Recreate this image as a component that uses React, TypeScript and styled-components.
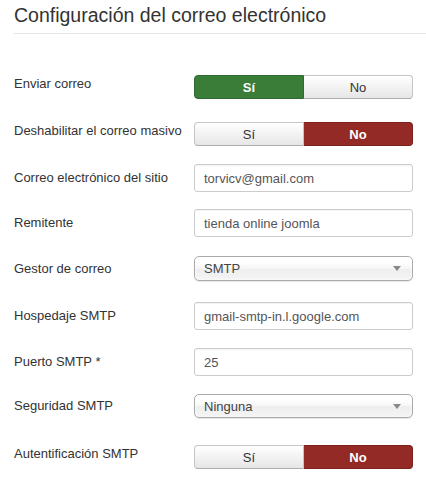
import React from "react";
import styled, { createGlobalStyle } from "styled-components";

const Global = createGlobalStyle`
  html, body { margin: 0; padding: 0; background: #fff; }
  body { font-family: "Liberation Sans", Arial, sans-serif; color: #333; font-size: 13px; }
`;

const Page = styled.div`
  padding: 0 0 0 14px;
  width: 426px;
  box-sizing: border-box;
`;

const Legend = styled.div`
  font-size: 19.5px;
  line-height: 24px;
  padding-top: 3px;
  padding-bottom: 6px;
  color: #333;
  border-bottom: 1px solid #e5e5e5;
`;

const Form = styled.div`
  display: flex;
  flex-direction: column;
  padding-top: 41px;
`;

const Row = styled.div<{ $mt: number }>`
  display: grid;
  grid-template-columns: 180px 219px;
  align-items: center;
  margin-top: ${(p) => p.$mt}px;
`;

const Label = styled.div<{ $lift?: boolean }>`
  font-size: 13px;
  line-height: 18px;
  color: #333;
  white-space: nowrap;
  padding-bottom: ${(p) => (p.$lift ? 6 : 0)}px;
`;

const Group = styled.div`
  display: flex;
  height: 24px;
`;

const ToggleBtn = styled.div<{ $active?: "yes" | "no" }>`
  flex: 1;
  display: flex;
  align-items: center;
  justify-content: center;
  font-size: 13px;
  box-sizing: border-box;
  border: 1px solid #c5c5c5;
  border-bottom-color: #adadad;
  color: ${(p) => (p.$active ? "#fff" : "#333")};
  font-weight: ${(p) => (p.$active ? 700 : 400)};
  background: ${(p) =>
    p.$active === "yes"
      ? "#3a7d38"
      : p.$active === "no"
      ? "#942a25"
      : "linear-gradient(#ffffff, #e6e6e6)"};
  ${(p) =>
    p.$active === "yes"
      ? "border-color: #2f6a2d;"
      : p.$active === "no"
      ? "border-color: #7d211d;"
      : ""}
  &:first-child {
    border-radius: 4px 0 0 4px;
  }
  &:last-child {
    border-radius: 0 4px 4px 0;
    border-left: none;
  }
`;

const Input = styled.div`
  height: 28px;
  box-sizing: border-box;
  border: 1px solid #ccc;
  border-radius: 3px;
  padding: 0 9px;
  display: flex;
  align-items: center;
  font-size: 13px;
  color: #555;
  background: #fff;
  box-shadow: inset 0 1px 1px rgba(0, 0, 0, 0.05);
`;

const Select = styled.div<{ $h: number }>`
  height: ${(p) => p.$h}px;
  box-sizing: border-box;
  border: 1px solid #aaa;
  border-radius: 5px;
  padding: 0 9px;
  display: flex;
  align-items: center;
  justify-content: space-between;
  font-size: 13px;
  color: #444;
  background: linear-gradient(#ffffff 20%, #f6f6f6 50%, #eeeeee 52%, #f4f4f4 100%);
  box-shadow: 0 0 3px #fff inset, 0 1px 1px rgba(0, 0, 0, 0.1);
`;

const Arrow = styled.span`
  width: 0;
  height: 0;
  border-left: 4px solid transparent;
  border-right: 4px solid transparent;
  border-top: 5px solid #888;
  margin-right: 2px;
`;

type Item =
  | { kind: "toggle"; label: string; mt: number; value: "yes" | "no" }
  | { kind: "input"; label: string; mt: number; value: string }
  | { kind: "select"; label: string; mt: number; value: string; h: number };

const items: Item[] = [
  { kind: "toggle", label: "Enviar correo", mt: 0, value: "yes" },
  { kind: "toggle", label: "Deshabilitar el correo masivo", mt: 23, value: "no" },
  { kind: "input", label: "Correo electrónico del sitio", mt: 18, value: "torvicv@gmail.com" },
  { kind: "input", label: "Remitente", mt: 17, value: "tienda online joomla" },
  { kind: "select", label: "Gestor de correo", mt: 19, value: "SMTP", h: 25 },
  { kind: "input", label: "Hospedaje SMTP", mt: 21, value: "gmail-smtp-in.l.google.com" },
  { kind: "input", label: "Puerto SMTP *", mt: 18, value: "25" },
  { kind: "select", label: "Seguridad SMTP", mt: 18, value: "Ninguna", h: 24 },
  { kind: "toggle", label: "Autentificación SMTP", mt: 27, value: "no" },
];

export default function App() {
  return (
    <>
      <Global />
      <Page>
        <Legend>Configuración del correo electrónico</Legend>
        <Form>
          {items.map((it, i) => (
            <Row key={i} $mt={it.mt}>
              <Label $lift={it.kind === "toggle"}>{it.label}</Label>
              {it.kind === "toggle" ? (
                <Group>
                  <ToggleBtn $active={it.value === "yes" ? "yes" : undefined}>Sí</ToggleBtn>
                  <ToggleBtn $active={it.value === "no" ? "no" : undefined}>No</ToggleBtn>
                </Group>
              ) : it.kind === "input" ? (
                <Input>{it.value}</Input>
              ) : (
                <Select $h={it.h}>
                  <span>{it.value}</span>
                  <Arrow />
                </Select>
              )}
            </Row>
          ))}
        </Form>
      </Page>
    </>
  );
}
